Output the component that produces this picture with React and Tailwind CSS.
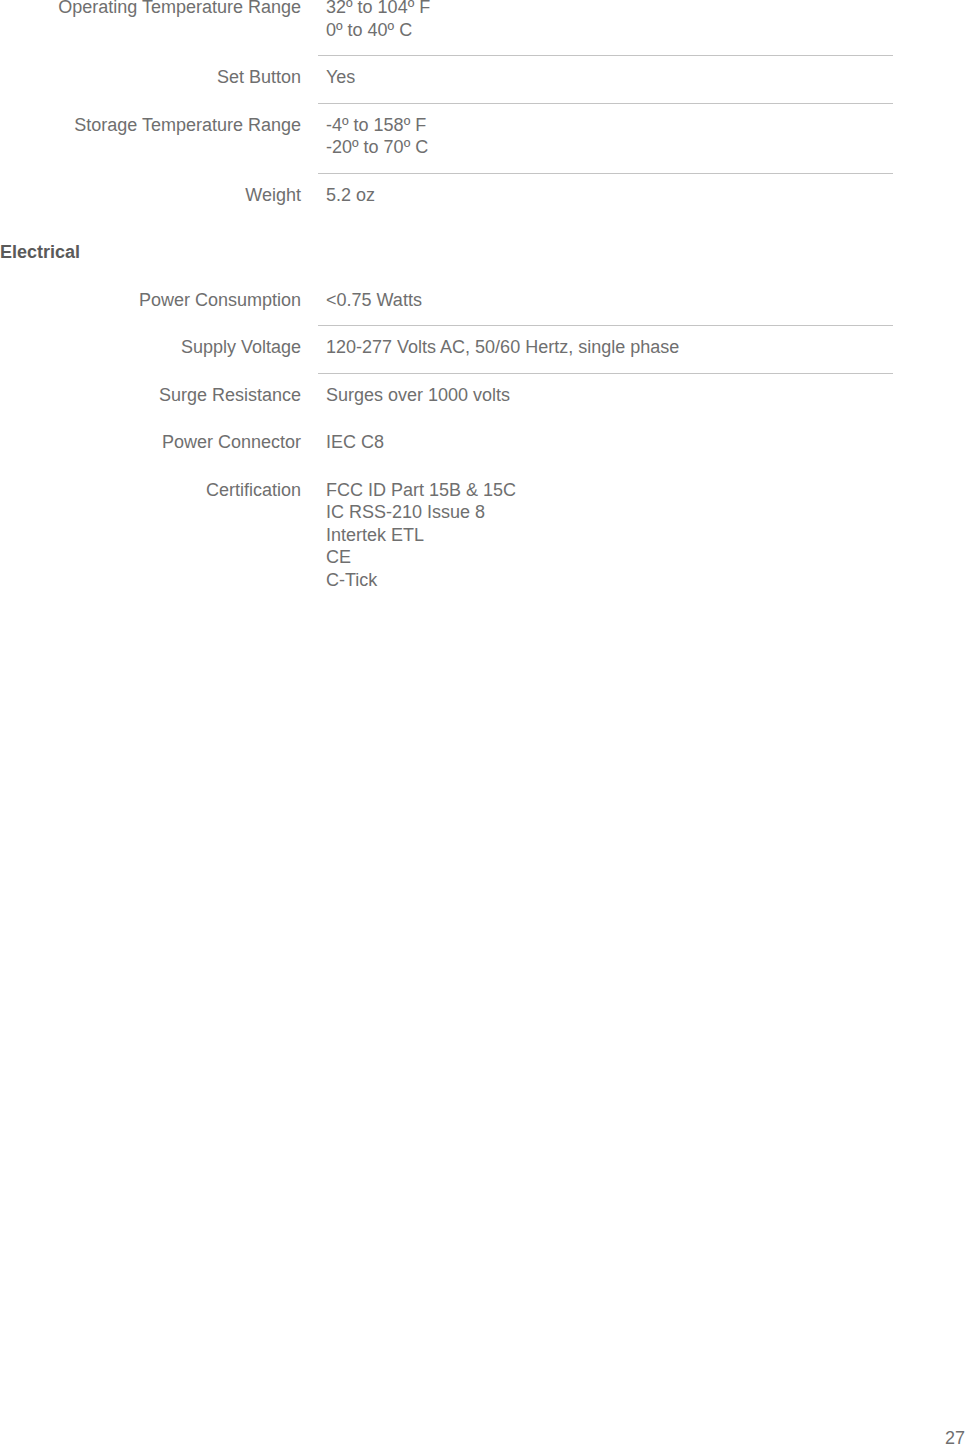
import React from 'react';

const SECTIONS_TOP = [
    { label: 'Operating Temperature Range', value: ['32º to 104º F', '0º to 40º C'], line: true },
    { label: 'Set Button', value: ['Yes'], line: true },
    { label: 'Storage Temperature Range', value: ['-4º to 158º F', '-20º to 70º C'], line: true },
    { label: 'Weight', value: ['5.2 oz'], line: false },
];

const ELECTRICAL = [
    { label: 'Power Consumption', value: ['<0.75 Watts'], line: true },
    { label: 'Supply Voltage', value: ['120-277 Volts AC, 50/60 Hertz, single phase'], line: true },
    { label: 'Surge Resistance', value: ['Surges over 1000 volts'], line: false },
    { label: 'Power Connector', value: ['IEC C8'], line: false },
    { label: 'Certification', value: ['FCC ID Part 15B & 15C', 'IC RSS-210 Issue 8', 'Intertek ETL', 'CE', 'C-Tick'], line: false },
];

const SpecRow = ({ label, value, line }) => (
    <div className="flex">
        <div className="w-[301px] shrink-0 text-right pt-[10px]">{label}</div>
        <div className={`ml-[17px] w-[575px] pl-2 pt-[10px] pb-[14px] ${line ? 'border-b border-[#c4c4c4]' : 'border-b border-transparent'}`}>
            {value.map((v) => (
                <div key={v}>{v}</div>
            ))}
        </div>
    </div>
);

export default function App() {
    return (
        <div
            className="h-[1445px] overflow-hidden bg-white flex flex-col text-[18px] leading-[22.5px] text-[#6f6f6f]"
            style={{ fontFamily: '"Liberation Sans", Arial, sans-serif' }}
        >
            <div className="mt-[-14px]">
                {SECTIONS_TOP.map((row) => (
                    <SpecRow key={row.label} {...row} />
                ))}
            </div>
            <h2 className="mt-[20px] mb-[15px] font-bold text-[#5a5a5a]">Electrical</h2>
            <div>
                {ELECTRICAL.map((row) => (
                    <SpecRow key={row.label} {...row} />
                ))}
            </div>
            <div className="flex-1" />
            <div className="text-right mb-[-4px]">27</div>
        </div>
    );
}
